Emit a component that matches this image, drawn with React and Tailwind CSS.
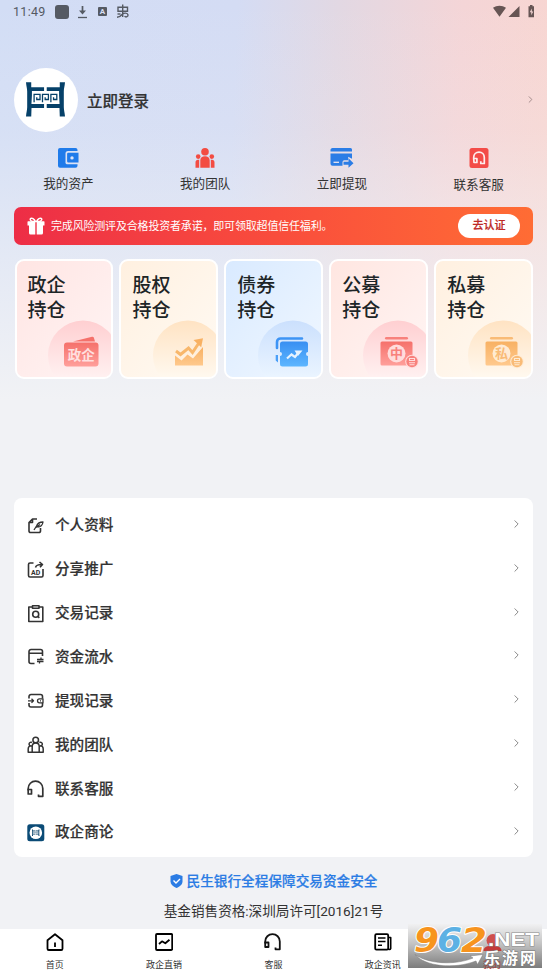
import { ChevronRight } from 'lucide-react';

const CJK = "Roboto, 'Noto Sans CJK SC', sans-serif";

const EmblemPaths = ({ fill = '#064169' }) => (
  <g>
    <path
      fill={fill}
      d="M0 0h5.300v5h13v4H6v4.500l-.5 8.500h12.800v4H5.600l-.3 8.700H0c.3-4 1.200-6 1.200-9.500V9.500C1.200 6 .3 4 0 0zM39.500 0h-5.300v5H21v4h12.500v4.500l.5 8.500H21v4h12.900l.3 8.700h5.300c-.3-4-1.200-6-1.200-9.500V9.500c0-3.500.9-5.500 1.200-9.500z"
    />
    <path
      fill="none"
      stroke={fill}
      strokeWidth="1.300"
      d="M8.200 20.300v-8.100h6v5.300h-3.300v-2.300M16.700 20.300v-8.100h6v5.300h-3.300v-2.300M25.200 20.300v-8.100h6v5.300h-3.300v-2.300"
    />
  </g>
);

const Headset = ({ color = '#333', width = 1.7 }) => (
  <g fill="none" stroke={color} strokeWidth={width} strokeLinejoin="round">
    <path d="M1.200 10.500V8.500C1.200 4.200 4.500 1.200 8.500 1.200S15.800 4.200 15.800 8.500v7.800h-4.300v-1.800" />
    <path d="M1.200 9.500h3.300v4.500H1.200z" />
  </g>
);

const StatusBar = () => (
  <div className="flex h-[23px] items-center justify-between pl-[13px] pr-[12px] text-[#555a63]">
    <div className="flex items-center">
      <span className="w-[42px] pt-px text-[12.5px] leading-none tracking-[0.3px]">11:49</span>
      <span className="h-[14px] w-[14px] rounded-[3px] bg-[#555a63]" />
      <svg className="ml-[8px]" width="11" height="14" viewBox="0 0 11 14">
        <path d="M5.500 1v7" stroke="currentColor" strokeWidth="1.700" />
        <path d="M2 5.500h7L5.500 9.500z" fill="currentColor" />
        <path d="M1 12.500h9" stroke="currentColor" strokeWidth="1.300" />
      </svg>
      <span className="ml-[10px] flex h-[9px] w-[9px] items-center justify-center rounded-[1px] bg-[#555a63] text-[8px] font-bold leading-none text-[#d7def2]">
        A
      </span>
      <svg className="ml-[9px]" width="14" height="15" viewBox="0 0 14 15" fill="none" stroke="currentColor" strokeWidth="1.400">
        <path d="M2 3.200h9.500v4H2zM6.700 .500V13M1 13.200c3 0 4-1.200 5.700-3.200 1-1.200 4.800-1.500 5.300.8.300 1.800-2 2.800-3.500 1.500" />
        <path d="M1.500 10h3" />
      </svg>
    </div>
    <svg className="text-[#665554]" width="43" height="14" viewBox="0 0 43 14" fill="currentColor">
      <path d="M1 2.800C4.800.1 10.200.1 14 2.800L7.500 11.700zM27.500 1v11H16.500zM36.500 1.200h1.500V0h2.500v1.200H42v11h-5.500z" />
      <path d="M39.800 3.500l-2 3.800h1.500v3l2-3.800h-1.500z" fill="#f6d7d5" />
    </svg>
  </div>
);

const WalletIcon = () => (
  <svg width="22" height="22" viewBox="0 0 22 22">
    <path
      fill="#1f7bea"
      d="M3 1h15.500a2 2 0 0 1 2 2v1H11a2.500 2.500 0 0 0-2.500 2.500v7.900A2.500 2.500 0 0 0 11 17.300h9.500v1.400a2 2 0 0 1-2 2H3a2 2 0 0 1-2-2V3a2 2 0 0 1 2-2z"
    />
    <path fill="#1f7bea" d="M11.300 5.800h10.200v9.600H11.300a1.200 1.200 0 0 1-1.200-1.200V7a1.200 1.200 0 0 1 1.200-1.200z" />
    <circle cx="15" cy="10.900" r="1.700" fill="#dde5f8" />
  </svg>
);

const TeamIcon = () => (
  <svg width="22" height="22" viewBox="0 0 22 22" fill="#f34c42">
    <circle cx="11" cy="4.700" r="3.800" />
    <circle cx="4.200" cy="9.600" r="2.300" />
    <circle cx="17.800" cy="9.600" r="2.300" />
    <path d="M6.300 20.700v-7.500C6.300 10.800 8.300 9.300 11 9.300s4.700 1.500 4.700 3.900v7.500zM1.500 20.700v-5.300c0-1.500 1-2.600 2.500-2.600h1.200v7.900zM20.500 20.700v-5.300c0-1.500-1-2.600-2.500-2.600h-1.200v7.900z" />
  </svg>
);

const CardOutIcon = () => (
  <svg className="overflow-visible" width="22" height="22" viewBox="0 0 22 22">
    <path
      fill="#2b7de6"
      d="M1.500 1h18a1.500 1.500 0 0 1 1.500 1.500v2H-.500v-2A2 2 0 0 1 1.500 1zM-.500 6.500H21v5.300l-3.800-2v3.400H13a2 2 0 0 0-1.500 2v3.600H1.500a2 2 0 0 1-2-2z"
    />
    <path d="M2.500 15.300h5.500" stroke="#e8e5f0" strokeWidth="1.300" />
    <path fill="#2b7de6" d="M12.500 14.800h5V11.300l5 4.900-5 4.500V17.800h-5z" />
  </svg>
);

const ServiceIcon = () => (
  <svg width="22" height="22" viewBox="0 0 22 22">
    <rect x="1.500" y="1" width="19" height="20" rx="2.500" fill="#f34c48" />
    <path
      d="M5.700 12.500V10.500c0-3.200 2.300-5.300 5.300-5.300s5.300 2.100 5.300 5.300v6H12.800v-2.200M5.700 11.500h3.200v4H6z"
      fill="none"
      stroke="#fdeeee"
      strokeWidth="1.700"
      strokeLinejoin="round"
    />
  </svg>
);

const shortcuts = [
  { label: '我的资产', icon: <WalletIcon /> },
  { label: '我的团队', icon: <TeamIcon /> },
  { label: '立即提现', icon: <CardOutIcon /> },
  { label: '联系客服', icon: <ServiceIcon />, labelClass: 'pt-px' },
];

const GiftIcon = () => (
  <svg width="18" height="18" viewBox="0 0 18 18" fill="#fff">
    <path d="M1 4.200h7.300V8.500H.500V4.700zM9.700 4.200H17l.5.500v3.800H9.700zM2 8.500h6.300v9H3.500A1.500 1.500 0 0 1 2 16zM9.700 8.500H16V16a1.500 1.500 0 0 1-1.500 1.500H9.700z" />
    <path d="M8.500 4.500C7 1.500 5 .8 3.800 1.400S3.500 4 5.500 4.500zM9.500 4.500c1.500-3 3.500-3.700 4.700-3.100s.3 2.600-1.700 3.100z" fill="none" stroke="#fff" strokeWidth="1.500" />
  </svg>
);

/* Artwork in the lower right corner of each holding card */
const GovArt = () => (
  <g>
    <path d="M24 19.500L43 14.800c1-.2 1.700.2 1.900 1L46 19.500z" fill="#f5716b" />
    <rect x="15" y="20.500" width="34.500" height="24" rx="3" fill="url(#redInk)" />
    <text x="32.200" y="37.800" textAnchor="middle" fontSize="13.500" fontWeight="700" fill="#ffe0e0" fontFamily={CJK}>
      政企
    </text>
  </g>
);

const EquityArt = () => (
  <g>
    <path d="M21 33.500l6.500 5 6-6 5.500 4L49 25v18.500H21z" fill="url(#orangeInk)" />
    <path d="M22 29l4.500 3.500 8-6.500 4 4.500 6-9" fill="none" stroke="#f8b76b" strokeWidth="3" />
    <path d="M39.500 18l9.500-1.800-1.800 9z" fill="#f8b163" />
  </g>
);

const BondArt = () => (
  <g>
    <path d="M18 26v-6a3.500 3.500 0 0 1 3.500-3.500h21.500" fill="none" stroke="#3d94f5" strokeWidth="2.600" strokeLinecap="round" />
    <path d="M16.700 33h2.300v7.500l-2.300-2z" fill="#4a9ff8" />
    <path
      d="M23.500 19.500h23a2.500 2.500 0 0 1 2.500 2.500v8a2 2 0 0 0 0 4v8a2.500 2.500 0 0 1-2.500 2.500h-23a2.500 2.500 0 0 1-2.500-2.500v-8a2 2 0 0 0 0-4v-8a2.500 2.500 0 0 1 2.500-2.500z"
      fill="url(#blueInk)"
    />
    <path d="M28 36.500l4.500-4 3.500 2.500 4-5" fill="none" stroke="#e6f3ff" strokeWidth="2.200" />
    <path d="M35.500 28.500h8l-4.500 5.500z" fill="#e6f3ff" />
  </g>
);

const FundArt = ({ char, ink, color, soft }) => (
  <g>
    <rect x="21" y="15" width="23" height="2.600" rx="1.300" fill={color} />
    <rect x="16.500" y="19.500" width="32" height="24" rx="1.500" fill={ink} />
    <circle cx="32.500" cy="31.500" r="9" fill={soft} />
    <text x="32.500" y="36.300" textAnchor="middle" fontSize="13" fontWeight="700" fill={color} fontFamily={CJK}>
      {char}
    </text>
    <circle cx="48" cy="39.500" r="6.800" fill={soft} />
    <circle cx="48" cy="39.500" r="5.700" fill={color} />
    <path d="M45.500 36.500h5v2h-5zM45 40.700h6M45.500 42.700h5" fill="none" stroke={soft} strokeWidth="1.100" />
  </g>
);

const holdings = [
  {
    name: '政企',
    bg: 'bg-linear-to-br from-[#ffe5e3] to-[#fff4f4]',
    halo: 'url(#redHalo)',
    art: <GovArt />,
  },
  {
    name: '股权',
    bg: 'bg-linear-to-br from-[#fff0e0] to-[#fffaf3]',
    halo: 'url(#orangeHalo)',
    art: <EquityArt />,
  },
  {
    name: '债券',
    bg: 'bg-linear-to-br from-[#d9eaff] to-[#f0f7ff]',
    halo: 'url(#blueHalo)',
    art: <BondArt />,
  },
  {
    name: '公募',
    bg: 'bg-linear-to-br from-[#ffe6e1] to-[#fff5f4]',
    halo: 'url(#redHalo)',
    art: <FundArt char="中" ink="url(#redInk)" color="#f8817c" soft="#ffdcdc" />,
  },
  {
    name: '私募',
    bg: 'bg-linear-to-br from-[#fff0e0] to-[#fffaf3]',
    halo: 'url(#orangeHalo)',
    art: <FundArt char="私" ink="url(#orangeInk)" color="#f9bb76" soft="#ffebd3" />,
  },
];

const Gradients = () => (
  <svg className="absolute h-0 w-0">
    <defs>
      <linearGradient id="redInk" x1="0" y1="0" x2="0" y2="1">
        <stop offset="0" stopColor="#f5716b" />
        <stop offset="1" stopColor="#ff9f9b" />
      </linearGradient>
      <linearGradient id="orangeInk" x1="0" y1="0" x2="0" y2="1">
        <stop offset="0" stopColor="#f8b163" />
        <stop offset="1" stopColor="#ffc98d" />
      </linearGradient>
      <linearGradient id="blueInk" x1="0" y1="0" x2="0" y2="1">
        <stop offset="0" stopColor="#388ff2" />
        <stop offset="1" stopColor="#5db6ff" />
      </linearGradient>
      <linearGradient id="redHalo" x1="0" y1="0" x2="0" y2="1">
        <stop offset="0" stopColor="#ffcfd1" />
        <stop offset=".8" stopColor="#fff0f0" />
      </linearGradient>
      <linearGradient id="orangeHalo" x1="0" y1="0" x2="0" y2="1">
        <stop offset="0" stopColor="#ffe3c3" />
        <stop offset=".8" stopColor="#fff8ee" />
      </linearGradient>
      <linearGradient id="blueHalo" x1="0" y1="0" x2="0" y2="1">
        <stop offset="0" stopColor="#cbe0fd" />
        <stop offset=".8" stopColor="#eaf4ff" />
      </linearGradient>
    </defs>
  </svg>
);

const HoldingCard = ({ name, bg, halo, art }) => (
  <div className={`flex h-[120px] flex-1 flex-col justify-between overflow-hidden rounded-[9px] border-2 border-white ${bg}`}>
    <div className="pl-[11px] pt-[12px] text-[19px] font-medium leading-[25px] text-[#1d2527]">
      <div>{name}</div>
      <div>持仓</div>
    </div>
    <svg className="-mt-[6px] shrink-0 self-end" width="63" height="57" viewBox="0 0 63 57">
      <circle cx="35" cy="35.500" r="35" fill={halo} />
      <g transform="translate(1 2)">{art}</g>
    </svg>
  </div>
);

const line = {
  fill: 'none',
  stroke: '#333',
  strokeWidth: 1.6,
  strokeLinejoin: 'round',
};

const menu = [
  {
    label: '个人资料',
    icon: (
      <g {...line}>
        <path d="M10 2H5.500L2 5.500V14A1.500 1.500 0 0 0 3.500 15.500H12a1.500 1.500 0 0 0 1.500-1.500V11M5.500 2v3.500H2" />
        <path d="M7 13l2.500-4C10.500 6.500 12.500 5 16 5c-.5 3.500-2.500 5-5.500 5M9 10.500l4-3" strokeWidth="1.300" />
      </g>
    ),
  },
  {
    label: '分享推广',
    icon: (
      <g {...line}>
        <path d="M6.500 2H3A1.500 1.500 0 0 0 1.500 3.500v11A1.500 1.500 0 0 0 3 16h11.500a1.500 1.500 0 0 0 1.500-1.500V8" />
        <path d="M8.500 6.500C9 4.500 11 3.500 14.500 3.500M12.500 1L15.500 3.500 13 6.200" />
        <text x="8.700" y="13.800" textAnchor="middle" fontSize="7" fontWeight="700" fill="#333" stroke="none" fontFamily="Roboto, sans-serif">
          AD
        </text>
      </g>
    ),
  },
  {
    label: '交易记录',
    icon: (
      <g {...line}>
        <path d="M5.500 2H1.800v14.500h14V2H12M5.500.800H12v2.400H5.500z" />
        <circle cx="8.700" cy="9.300" r="3" />
        <path d="M10.800 11.300l1.500 1.600" />
      </g>
    ),
  },
  {
    label: '资金流水',
    icon: (
      <g {...line}>
        <path d="M7.500 15.500H4A2 2 0 0 1 2 13.500v-10a2 2 0 0 1 2-2h9.500a2 2 0 0 1 2 2V8M2 5.300h13.500" />
        <path d="M10 11.500h6.500M14 9.500v2M10 13.500h6.500M12.500 13.500v2" strokeWidth="1.300" />
      </g>
    ),
  },
  {
    label: '提现记录',
    icon: (
      <g {...line}>
        <path d="M2 6.500V4.500a2 2 0 0 1 2-2h9.500a2 2 0 0 1 2 2v2M2 11v2a2 2 0 0 0 2 2h9.500a2 2 0 0 0 2-2v-2" />
        <path d="M1 8.800h5.500M4.500 6.800l2 2-2 2M16 6.800h-3.500a2 2 0 0 0 0 4H16zM13 8.800h1" strokeWidth="1.300" />
      </g>
    ),
  },
  {
    label: '我的团队',
    icon: (
      <g {...line} strokeWidth="1.500">
        <circle cx="8.700" cy="4" r="2.800" />
        <path d="M5.200 16.300V10.500c0-2 1.500-3.500 3.500-3.500s3.500 1.500 3.500 3.500v5.800zM5 6.500a1.900 1.900 0 1 0-.8 3.500M12.400 6.500a1.900 1.900 0 1 1 .8 3.500M4.500 9.800C2.500 9.800 1.200 11 1.200 13v3.300h15V13c0-2-1.300-3.200-3.300-3.200" />
      </g>
    ),
  },
  { label: '联系客服', icon: <Headset width={1.7} /> },
  {
    label: '政企商论',
    icon: (
      <g>
        <rect x=".300" y=".300" width="17" height="17" rx="2.500" fill="#0b4b76" />
        <circle cx="8.800" cy="8.800" r="6.300" fill="#fff" />
        <g transform="translate(5 5.500) scale(.19)">
          <EmblemPaths />
        </g>
      </g>
    ),
  },
];

const tabs = [
  {
    label: '首页',
    icon: (
      <g fill="none" stroke="#000" strokeWidth="1.800" strokeLinejoin="round">
        <path d="M1.500 7.200L9 1.200l7.500 6v8.500a1.300 1.300 0 0 1-1.300 1.300H2.800a1.300 1.300 0 0 1-1.300-1.300z" />
        <path d="M9 9.500v4.500" />
      </g>
    ),
  },
  {
    label: '政企直销',
    icon: (
      <g fill="none" stroke="#000" strokeWidth="1.800" strokeLinejoin="round">
        <rect x="1" y="1" width="16.200" height="16" rx="1" />
        <path d="M4 11l3-2.700 3.300 2 4.200-3.500" />
      </g>
    ),
  },
  { label: '客服', icon: <Headset color="#111" width={1.8} /> },
  {
    label: '政企资讯',
    icon: (
      <g fill="none" stroke="#000" strokeWidth="1.800" strokeLinejoin="round">
        <rect x="1.200" y="1.200" width="13" height="15.500" rx="1.200" />
        <path d="M14.200 4.500h2.500v11a1.300 1.300 0 0 1-2.500 0M4 5h7.500M4 8.500h7.500M4 12.300h4" strokeWidth="1.600" />
      </g>
    ),
  },
];

const Watermark = () => (
  <svg className="absolute left-[408px] top-[-5px] overflow-visible" width="134" height="45" viewBox="0 0 134 45">
    <defs>
      <linearGradient id="wmBg" x1="0" y1="0" x2="0" y2="1">
        <stop offset="0" stopColor="#f1f1f2" />
        <stop offset=".45" stopColor="#c3c3c3" />
        <stop offset="1" stopColor="#7c7c7c" />
      </linearGradient>
    </defs>
    <rect width="134" height="44" fill="url(#wmBg)" />
    <circle cx="85" cy="16.500" r="6.500" fill="#cf4f4c" />
    <path d="M75.500 27c0-4 4-5.500 9-5.500s9 1.500 9 5.500z" fill="#c43a38" />
    <text x="84" y="43.500" textAnchor="middle" fontSize="9" fill="#a83b36" fontFamily={CJK}>
      我的
    </text>
    <g
      fontFamily="'DejaVu Sans', sans-serif"
      fontWeight="700"
      fontStyle="italic"
      fontSize="33"
      stroke="#fff"
      strokeWidth="2"
      strokeLinejoin="round"
      paintOrder="stroke"
    >
      <text x="6" y="28" fill="#f7941e" textLength="25" lengthAdjust="spacingAndGlyphs">9</text>
      <text x="29" y="28" fill="#5cb1e4" textLength="25" lengthAdjust="spacingAndGlyphs">6</text>
      <text x="53" y="28" fill="#f7941e" textLength="26" lengthAdjust="spacingAndGlyphs">2</text>
    </g>
    <path d="M7 30.500c13 9.500 40 11 58 3.500l-3-2 13-1.500-5.500 10-1.500-3.500C46 45.500 17 42.500 7 30.500z" fill="#fff" stroke="#777" strokeWidth=".500" />
    <text
      x="80"
      y="22"
      fontSize="18"
      fontWeight="700"
      fill="#fff"
      stroke="#8b8b8b"
      strokeWidth="1"
      paintOrder="stroke"
      textLength="51"
      lengthAdjust="spacingAndGlyphs"
      fontFamily="'Liberation Sans', sans-serif"
    >
      .NET
    </text>
    <text
      x="76"
      y="40"
      fontSize="16"
      fontWeight="700"
      fill="#fff"
      stroke="#777"
      strokeWidth="1"
      paintOrder="stroke"
      textLength="52"
      fontFamily={CJK}
    >
      乐游网
    </text>
  </svg>
);

const App = () => {
  return (
    <div className="flex h-[974px] w-[547px] flex-col overflow-hidden bg-[#f1f2f5] font-[Roboto,'Noto_Sans_CJK_SC',sans-serif] text-[#333]">
      <Gradients />

      {/* Profile area with the tinted backdrop */}
      <div className="h-[498px] bg-[linear-gradient(180deg,rgba(241,242,245,0)_0,rgba(241,242,245,0.15)_130px,rgba(241,242,245,0.58)_260px,#f1f2f5_400px),linear-gradient(92deg,#d2ddf5_0%,#d4dcf4_42%,#e2d8e3_60%,#f4d5d7_82%,#f8d6d1_100%)]">
        <StatusBar />

        <div className="mt-[45px] flex items-center pl-[14px] pr-[11px]">
          <div className="flex h-[64px] w-[64px] items-center justify-center rounded-full bg-white">
            <svg className="mb-[2px] mr-px" width="39" height="35" viewBox="0 0 39.500 35">
              <EmblemPaths />
            </svg>
          </div>
          <span className="ml-[9px] flex-1 pt-[3px] text-[15.500px] font-medium leading-6 [-webkit-text-stroke:0.2px]">立即登录</span>
          <ChevronRight className="mb-px h-[13px] w-[11px] text-[#9d8585]" strokeWidth={2} />
        </div>

        <div className="mt-[15px] flex">
          {shortcuts.map((item) => (
            <div key={item.label} className="flex flex-1 flex-col items-center">
              {item.icon}
              <span className={`mt-[5px] text-[12.600px] leading-[20px] ${item.labelClass || ''}`}>{item.label}</span>
            </div>
          ))}
        </div>

        <div className="mx-[14px] mt-[12px] flex h-[38px] items-center rounded-[7px] bg-linear-to-r from-[#ed2d46] via-[#f94c3c] to-[#ff6c34] pl-[13px] pr-[13px]">
          <GiftIcon />
          <span className="ml-[6px] flex-1 pt-[2px] text-[11px] tracking-[-0.180px] text-white">
            完成风险测评及合格投资者承诺，即可领取超值信任福利。
          </span>
          <button className="h-[24px] w-[62px] rounded-full bg-white pt-px text-[11px] font-medium text-[#bd2926] [-webkit-text-stroke:0.2px]">
            去认证
          </button>
        </div>

        <div className="mt-[14px] flex gap-[6px] pl-[14.500px] pr-[14px]">
          {holdings.map((item) => (
            <HoldingCard key={item.name} {...item} />
          ))}
        </div>
      </div>

      {/* Menu list */}
      <div className="mx-[14px] h-[359px] rounded-[8px] bg-white pl-[13px] pr-[10px] pt-[6px]">
        {menu.map((item) => (
          <div key={item.label} className="flex h-[43.850px] items-center">
            <svg width="18" height="18" viewBox="0 0 18 18">
              {item.icon}
            </svg>
            <span className="ml-[10px] flex-1 pt-px text-[14.600px] font-medium [-webkit-text-stroke:0.2px]">{item.label}</span>
            <ChevronRight className="mb-[4px] h-[14px] w-[13px] text-[#888]" strokeWidth={1.8} />
          </div>
        ))}
      </div>

      <div className="flex h-[72px] flex-col items-center pt-[12px]">
        <div className="flex items-center text-[13.650px] font-medium leading-[24px] text-[#2b7ce4] [-webkit-text-stroke:0.2px]">
          <svg className="mr-[4px]" width="13" height="14" viewBox="0 0 13 14">
            <path d="M6.500 0l6 2v5.500c0 3-2.500 5-6 6.500-3.500-1.500-6-3.500-6-6.500V2z" fill="#2b7ce4" />
            <path d="M3.500 6.500l2.500 2.500 4-4" fill="none" stroke="#fff" strokeWidth="1.400" />
          </svg>
          民生银行全程保障交易资金安全
        </div>
        <div className="mt-[7px] text-[13.600px] leading-[22px]">基金销售资格:深圳局许可[2016]21号</div>
      </div>

      {/* Bottom tabs */}
      <div className="relative flex h-[45px] bg-white">
        {tabs.map((tab) => (
          <div key={tab.label} className="flex w-1/5 flex-col items-center pt-[4px]">
            <svg width="18" height="18" viewBox="0 0 18 18">
              {tab.icon}
            </svg>
            <span className="mt-[8px] text-[9px] leading-[13px]">{tab.label}</span>
          </div>
        ))}
        <Watermark />
      </div>
    </div>
  );
};

export default App;
